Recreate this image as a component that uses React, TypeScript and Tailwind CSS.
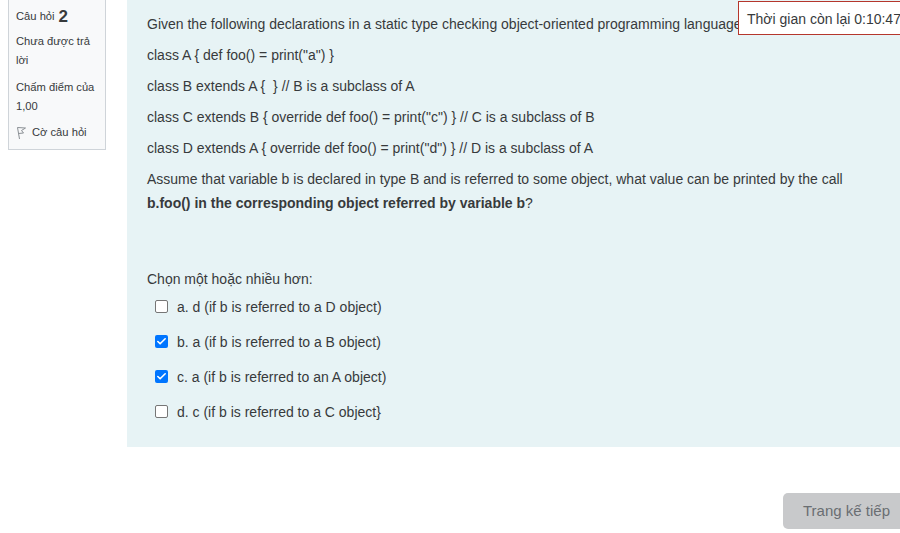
import { Check } from 'lucide-react'

const options = [
  { label: 'a. d (if b is referred to a D object)', checked: false },
  { label: 'b. a (if b is referred to a B object)', checked: true },
  { label: 'c. a (if b is referred to an A object)', checked: true },
  { label: 'd. c (if b is referred to a C object}', checked: false },
]

const declarations = [
  'class A { def foo() = print("a") }',
  'class B extends A {  } // B is a subclass of A',
  'class C extends B { override def foo() = print("c") } // C is a subclass of B',
  'class D extends A { override def foo() = print("d") } // D is a subclass of A',
]

const FlagIcon = () => (
  <svg width="10" height="14" viewBox="0 0 10 14" fill="none" stroke="#8a8f94" strokeWidth="1">
    <path d="M1.5 1.5 L3.5 13" />
    <path d="M1.5 1.5 L9.5 2 L5.5 4.5 L7.5 7 L2.5 7.5" />
  </svg>
)

export default function App() {
  return (
    <div className="relative h-[533px] w-[900px] overflow-hidden bg-white font-['Liberation_Sans',Arial,sans-serif] text-[#373a3c]">
      <div className="flex items-start pl-2">
        <div className="w-[98px] h-[150px] shrink-0 border border-t-0 border-[#cfd4d9] bg-[#f8f9fa] pl-[7px] pr-1 pt-[5px] text-[11.2px] leading-[19px]">
          <div className="h-[22px] flex items-center gap-1">
            <span>Câu hỏi</span>
            <span className="text-[17px] font-bold">2</span>
          </div>
          <p className="mt-[5px]">Chưa được trả lời</p>
          <p className="mt-2">Chấm điểm của 1,00</p>
          <div className="mt-[7px] flex items-center gap-[6px]">
            <FlagIcon />
            <span>Cờ câu hỏi</span>
          </div>
        </div>

        <div className="ml-[21px] w-[800px] shrink-0">
          <div className="h-[447px] bg-[#e7f3f5] pl-5 pr-[50px] pt-3 text-sm leading-6">
            <p className="mb-[7px]">Given the following declarations in a static type checking object-oriented programming language:</p>
            {declarations.map((d) => (
              <p key={d} className="mb-[7px] whitespace-pre">{d}</p>
            ))}
            <p>
              Assume that variable b is declared in type B and is referred to some object, what value can be printed by the call{' '}
              <strong>b.foo() in the corresponding object referred by variable b</strong>?
            </p>
            <p className="mt-[52px]">Chọn một hoặc nhiều hơn:</p>
            <div className="-mt-[2px] flex flex-col pl-2">
              {options.map((o) => (
                <div key={o.label} className="flex h-[35px] items-center gap-[9px]">
                  <span
                    className={
                      o.checked
                        ? 'flex h-[13px] w-[13px] items-center justify-center rounded-[2px] bg-[#0075ff]'
                        : 'h-[13px] w-[13px] rounded-[2px] border border-[#767676] bg-white'
                    }
                  >
                    {o.checked && <Check size={11} strokeWidth={3.5} color="white" />}
                  </span>
                  <span>{o.label}</span>
                </div>
              ))}
            </div>
          </div>
          <div className="mt-[46px] ml-[656px] flex h-9 w-[130px] items-center rounded-[5px] bg-[#c8c9cb] pl-5 text-[15px] text-[#6a6e72]">
            Trang kế tiếp
          </div>
        </div>
      </div>

      <div className="absolute left-[738px] top-[1px] flex h-[34px] w-[180px] items-center border border-[#b5362c] bg-white pl-2 pt-px text-sm">
        Thời gian còn lại 0:10:47
      </div>
    </div>
  )
}
